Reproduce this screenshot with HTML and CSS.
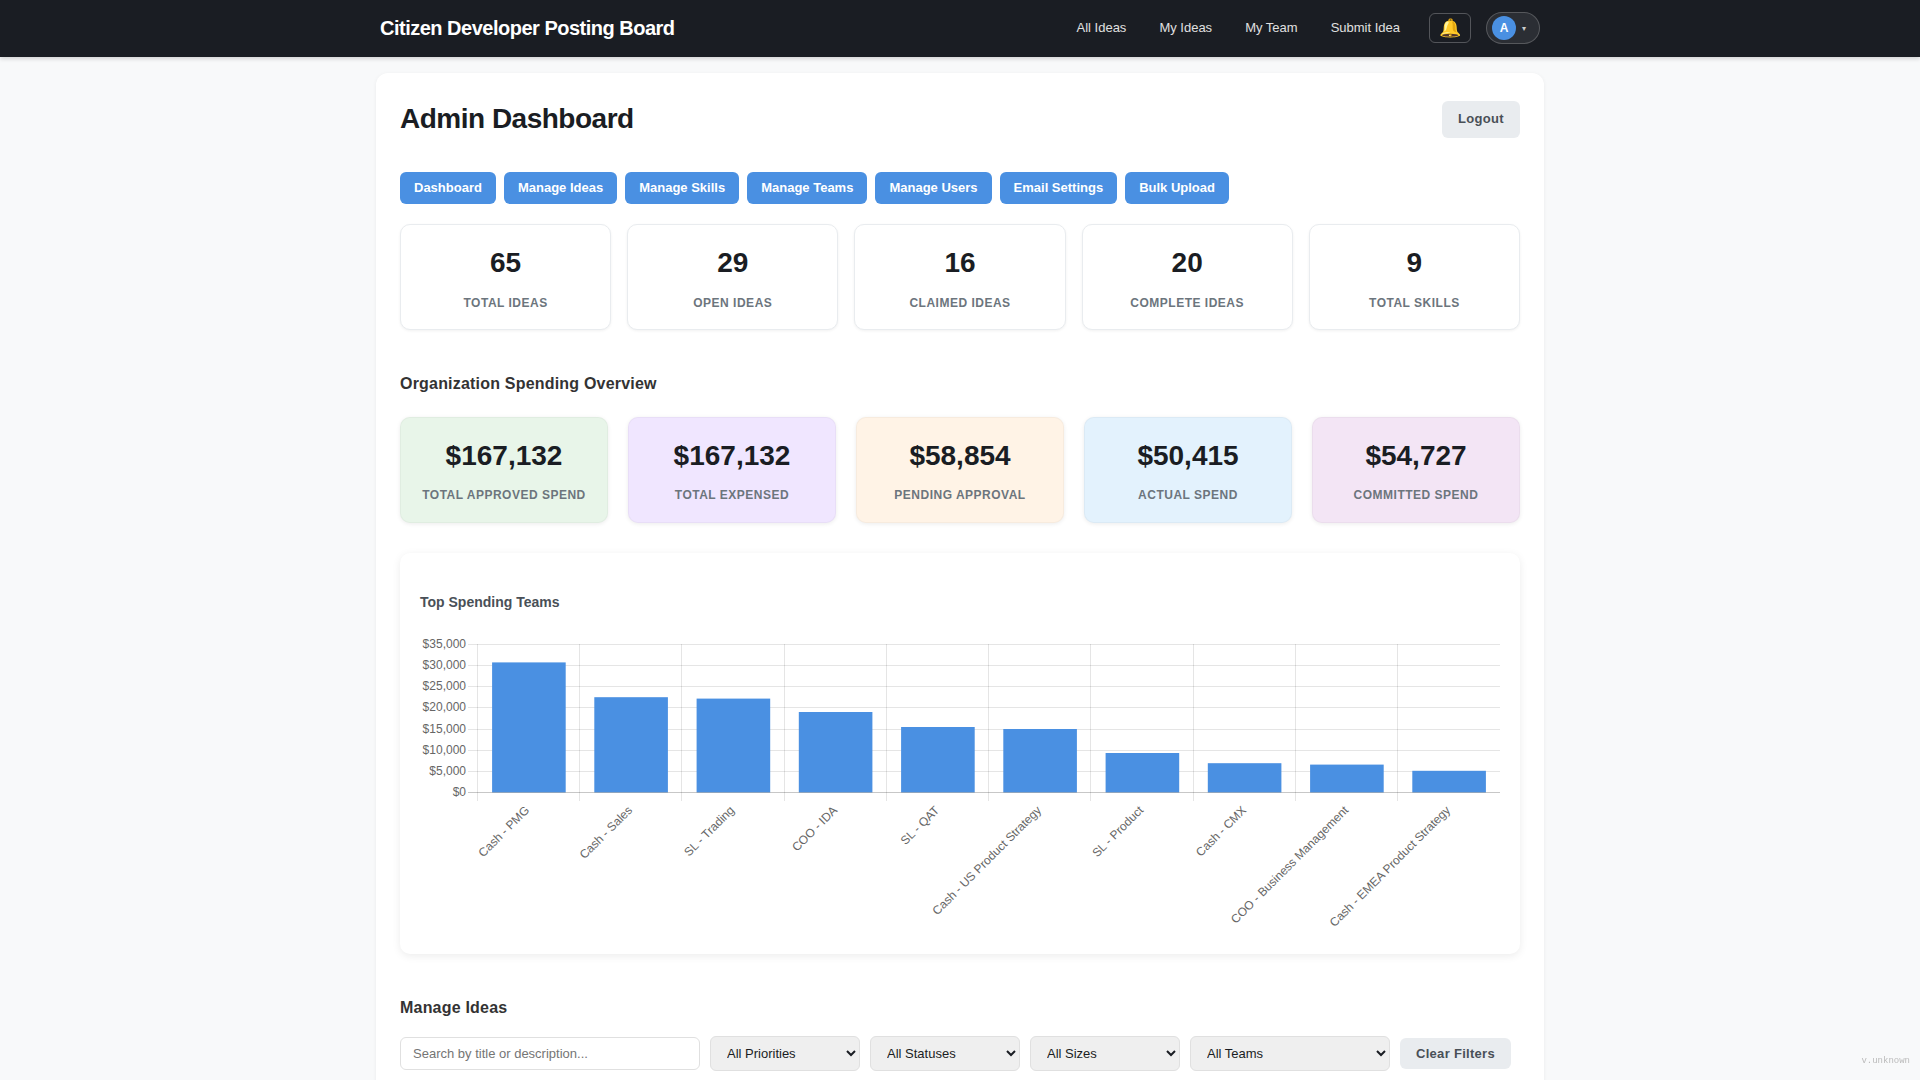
FILE: index.html
```html
<!DOCTYPE html>
<html>
<head>
    <title>Citizen Developer Posting Board</title>
    <link rel="stylesheet" href="styles.css">
</head>
<body>
    <header class="topbar">
        <div class="topbar-inner">
            <div class="brand">Citizen Developer Posting Board</div>
            <nav class="topnav">
                <a href="#">All Ideas</a>
                <a href="#">My Ideas</a>
                <a href="#">My Team</a>
                <a href="#">Submit Idea</a>
            </nav>
            <button class="bell-btn">🔔</button>
            <div class="user-pill">
                <span class="avatar">A</span>
                <span class="caret">▾</span>
            </div>
        </div>
    </header>

    <main class="page-card">
        <div class="page-head">
            <h1>Admin Dashboard</h1>
            <button class="btn-muted logout">Logout</button>
        </div>

        <div class="admin-nav">
            <a href="#">Dashboard</a>
            <a href="#">Manage Ideas</a>
            <a href="#">Manage Skills</a>
            <a href="#">Manage Teams</a>
            <a href="#">Manage Users</a>
            <a href="#">Email Settings</a>
            <a href="#">Bulk Upload</a>
        </div>

        <div class="stat-grid">
            <div class="stat-card"><div class="stat-value">65</div><div class="stat-label">Total Ideas</div></div>
            <div class="stat-card"><div class="stat-value">29</div><div class="stat-label">Open Ideas</div></div>
            <div class="stat-card"><div class="stat-value">16</div><div class="stat-label">Claimed Ideas</div></div>
            <div class="stat-card"><div class="stat-value">20</div><div class="stat-label">Complete Ideas</div></div>
            <div class="stat-card"><div class="stat-value">9</div><div class="stat-label">Total Skills</div></div>
        </div>

        <h2 class="section-title spend-title">Organization Spending Overview</h2>

        <div class="spend-grid">
            <div class="spend-card spend-green"><div class="stat-value">$167,132</div><div class="stat-label">Total Approved Spend</div></div>
            <div class="spend-card spend-purple"><div class="stat-value">$167,132</div><div class="stat-label">Total Expensed</div></div>
            <div class="spend-card spend-orange"><div class="stat-value">$58,854</div><div class="stat-label">Pending Approval</div></div>
            <div class="spend-card spend-blue"><div class="stat-value">$50,415</div><div class="stat-label">Actual Spend</div></div>
            <div class="spend-card spend-pink"><div class="stat-value">$54,727</div><div class="stat-label">Committed Spend</div></div>
        </div>

        <section class="chart-card">
            <h3>Top Spending Teams</h3>
            <svg class="chart" viewBox="420 636 1080 301" width="1080" height="301">
                <g class="grid">
                    <path d="M468 644.5H1500M468 665.5H1500M468 686.5H1500M468 707.5H1500M468 729.5H1500M468 750.5H1500M468 771.5H1500"/>
                    <path d="M477.5 644V801M579.5 644V801M681.5 644V801M784.5 644V801M886.5 644V801M988.5 644V801M1090.5 644V801M1193.5 644V801M1295.5 644V801M1397.5 644V801"/>
                </g>
                <g class="bars">
                    <rect x="492.1" y="662.4" width="73.6" height="130"/>
                    <rect x="594.3" y="697.2" width="73.6" height="95.2"/>
                    <rect x="696.6" y="698.6" width="73.6" height="93.8"/>
                    <rect x="798.8" y="712" width="73.6" height="80.4"/>
                    <rect x="901.1" y="727" width="73.6" height="65.4"/>
                    <rect x="1003.3" y="729" width="73.6" height="63.4"/>
                    <rect x="1105.6" y="753" width="73.6" height="39.4"/>
                    <rect x="1207.8" y="763.2" width="73.6" height="29.2"/>
                    <rect x="1310.1" y="764.6" width="73.6" height="27.8"/>
                    <rect x="1412.3" y="770.8" width="73.6" height="21.6"/>
                </g>
                <path class="axis" d="M468 792.5H1500"/>
                <g class="y-labels">
                    <text x="466" y="648">$35,000</text>
                    <text x="466" y="669">$30,000</text>
                    <text x="466" y="690">$25,000</text>
                    <text x="466" y="711">$20,000</text>
                    <text x="466" y="733">$15,000</text>
                    <text x="466" y="754">$10,000</text>
                    <text x="466" y="775">$5,000</text>
                    <text x="466" y="796">$0</text>
                </g>
                <g class="x-labels">
                    <text transform="translate(530 811) rotate(-45)">Cash - PMG</text>
                    <text transform="translate(633 811) rotate(-45)">Cash - Sales</text>
                    <text transform="translate(735 811) rotate(-45)">SL - Trading</text>
                    <text transform="translate(838 811) rotate(-45)">COO - IDA</text>
                    <text transform="translate(940 811) rotate(-45)">SL - QAT</text>
                    <text transform="translate(1042 811) rotate(-45)">Cash - US Product Strategy</text>
                    <text transform="translate(1144 811) rotate(-45)">SL - Product</text>
                    <text transform="translate(1247 811) rotate(-45)">Cash - CMX</text>
                    <text transform="translate(1349 811) rotate(-45)">COO - Business Management</text>
                    <text transform="translate(1451 811) rotate(-45)">Cash - EMEA Product Strategy</text>
                </g>
            </svg>
        </section>

        <h2 class="section-title ideas-title">Manage Ideas</h2>

        <div class="filters">
            <input type="text" class="search" placeholder="Search by title or description...">
            <select class="filter-select"><option>All Priorities</option></select>
            <select class="filter-select"><option>All Statuses</option></select>
            <select class="filter-select"><option>All Sizes</option></select>
            <select class="filter-select team-select"><option>All Teams</option></select>
            <button class="btn-muted clear-btn">Clear Filters</button>
        </div>
    </main>

    <div class="version">v.unknown</div>
</body>
</html>
```

FILE: styles.css
```css
* {
    box-sizing: border-box;
}

body {
    font-family: "Liberation Sans", Arial, sans-serif;
    background-color: #f8f9fa;
    color: #1a1d23;
    margin: 0;
}

.topbar {
    height: 57px;
    background-color: #1a1d23;
    box-shadow: 0 2px 4px rgba(0, 0, 0, 0.15);
}

.topbar-inner {
    max-width: 1160px;
    height: 56px;
    margin: 0 auto;
    display: flex;
    align-items: center;
}

.brand {
    color: #fff;
    font-size: 20px;
    font-weight: 700;
    letter-spacing: -0.5px;
    margin-right: auto;
}

.topnav {
    display: flex;
    gap: 33px;
    margin-right: 29px;
    padding-bottom: 1px;
}

.topnav a {
    color: #e0e0e0;
    font-size: 13px;
    text-decoration: none;
}

.bell-btn {
    width: 42px;
    height: 30px;
    padding: 0;
    background: transparent;
    border: 1px solid rgba(255, 255, 255, 0.25);
    border-radius: 6px;
    font-size: 18px;
    margin-right: 15px;
}

.user-pill {
    width: 54px;
    height: 32px;
    display: flex;
    align-items: center;
    padding-left: 5px;
    gap: 6px;
    background-color: rgba(255, 255, 255, 0.08);
    border: 1px solid rgba(255, 255, 255, 0.2);
    border-radius: 16px;
}

.avatar {
    width: 24px;
    height: 24px;
    border-radius: 50%;
    background-color: #4a90e2;
    color: #fff;
    font-size: 12px;
    font-weight: 700;
    display: flex;
    align-items: center;
    justify-content: center;
}

.caret {
    color: #ccc;
    font-size: 8px;
}

.page-card {
    width: 1168px;
    margin: 16px auto 0;
    padding: 28px 24px 40px;
    background-color: #fff;
    border-radius: 12px;
    box-shadow: 0 1px 4px rgba(0, 0, 0, 0.06);
}

.page-head {
    display: flex;
    justify-content: space-between;
    align-items: center;
    margin-bottom: 34px;
}

h1 {
    margin: 0 0 2px;
    font-size: 28px;
    font-weight: 700;
    letter-spacing: -0.5px;
}

.btn-muted {
    font-family: inherit;
    font-weight: 700;
    font-size: 13px;
    letter-spacing: 0.3px;
    color: #495057;
    background-color: #e9ecef;
    border: none;
    border-radius: 6px;
}

.logout {
    width: 78px;
    height: 37px;
    padding: 0 0 2px;
}

.admin-nav {
    display: flex;
    gap: 8px;
    margin-bottom: 20px;
}

.admin-nav a {
    height: 32px;
    line-height: 32px;
    padding: 0 14px;
    background-color: #4a90e2;
    color: #fff;
    font-size: 13px;
    font-weight: 700;
    text-decoration: none;
    border-radius: 6px;
}

.stat-grid {
    display: grid;
    grid-template-columns: repeat(5, 1fr);
    gap: 16px;
}

.stat-card {
    height: 106px;
    padding-top: 22px;
    text-align: center;
    background-color: #fff;
    border: 1px solid #e9ecef;
    border-radius: 10px;
    box-shadow: 0 1px 3px rgba(0, 0, 0, 0.06);
}

.stat-value {
    font-size: 28px;
    line-height: 32px;
    font-weight: 700;
    color: #1a1d23;
}

.stat-label {
    margin-top: 17px;
    font-size: 12px;
    line-height: 14px;
    font-weight: 700;
    letter-spacing: 0.5px;
    text-transform: uppercase;
    color: #6c757d;
}

.section-title {
    margin: 0;
    font-size: 16px;
    line-height: 18px;
    font-weight: 700;
    letter-spacing: 0.2px;
    color: #333;
}

.spend-title {
    margin-top: 45px;
    margin-bottom: 24px;
}

.spend-grid {
    display: grid;
    grid-template-columns: repeat(5, 1fr);
    gap: 20px;
}

.spend-card {
    height: 106px;
    padding-top: 22px;
    text-align: center;
    border: 1px solid rgba(0, 0, 0, 0.03);
    border-radius: 10px;
    box-shadow: 0 1px 4px rgba(0, 0, 0, 0.08);
}

.spend-card .stat-label {
    margin-top: 16px;
}

.spend-green { background-color: #e8f5e9; }
.spend-purple { background-color: #f0e6ff; }
.spend-orange { background-color: #fff3e6; }
.spend-blue { background-color: #e3f2fd; }
.spend-pink { background-color: #f3e5f5; }

.chart-card {
    height: 401px;
    margin-top: 30px;
    padding: 41px 20px 0;
    background-color: #fff;
    border-radius: 10px;
    box-shadow: 0 2px 8px rgba(0, 0, 0, 0.08);
}

.chart-card h3 {
    margin: 0 0 26px;
    font-size: 14px;
    line-height: 16px;
    font-weight: 700;
    color: #495057;
}

.chart {
    display: block;
}

.grid path {
    fill: none;
    stroke: rgba(0, 0, 0, 0.1);
    stroke-width: 1;
}

.axis {
    fill: none;
    stroke: rgba(0, 0, 0, 0.22);
    stroke-width: 1;
}

.bars rect {
    fill: #4a90e2;
}

.y-labels text,
.x-labels text {
    font-family: "Liberation Sans", Arial, sans-serif;
    font-size: 12px;
    fill: #666;
    text-anchor: end;
}

.ideas-title {
    margin-top: 45px;
    margin-bottom: 19px;
}

.filters {
    display: flex;
    align-items: center;
    gap: 10px;
}

.search {
    width: 300px;
    height: 33px;
    padding: 0 12px;
    font-family: inherit;
    font-size: 13px;
    border: 1px solid #e0e0e0;
    border-radius: 6px;
}

.filter-select {
    width: 150px;
    height: 35px;
    padding: 0 12px;
    font-family: inherit;
    font-size: 13px;
    color: #1a1d23;
    background-color: #efefef;
    border: 1px solid #e0e0e0;
    border-radius: 6px;
}

.team-select {
    width: 200px;
    padding: 0 12px;
}

.clear-btn {
    width: 111px;
    height: 31px;
    padding: 0;
}

.version {
    position: fixed;
    right: 10px;
    bottom: 14px;
    font-family: "Liberation Mono", monospace;
    font-size: 9px;
    color: #bbb;
}
```
